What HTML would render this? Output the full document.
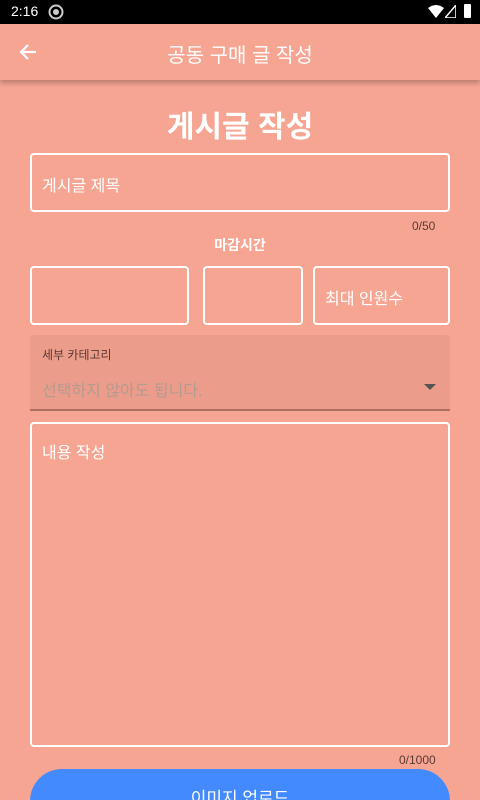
<!DOCTYPE html>
<html style="width:480px;height:800px;overflow:hidden"><head><meta charset="utf-8"><style>
*{margin:0;padding:0;box-sizing:border-box}
body{width:480px;height:800px;overflow:hidden;background:#f6a593;font-family:"Liberation Sans","Noto Sans CJK KR",sans-serif;position:relative}
.abs{position:absolute}
.box{position:absolute;border:2px solid #fff;border-radius:4px}
.ph{position:absolute;color:#fff;font-size:16px}
.cnt{position:absolute;font-size:12px;color:#5a3a33}
</style></head><body>
<div class="abs" style="left:0;top:0;width:480px;height:24px;background:#000;color:#fff;font-size:14px">
<span class="abs" style="left:11px;top:3px">2:16</span>
<svg class="abs" style="left:48px;top:4px" width="16" height="16" viewBox="0 0 16 16"><circle cx="8" cy="8" r="6.5" fill="none" stroke="#ccc" stroke-width="2"/><circle cx="8" cy="8" r="3" fill="#ccc"/></svg>
<svg class="abs" style="left:428px;top:5px" width="16" height="13" viewBox="0 0 16 13"><path d="M0 3 Q8 -3 16 3 L8 13Z" fill="#fff"/></svg>
<svg class="abs" style="left:445px;top:5px" width="11" height="13" viewBox="0 0 11 13"><path d="M11 0 V13 H0Z" fill="none" stroke="#fff" stroke-width="1.5"/></svg>
<div class="abs" style="left:464px;top:4px;width:7px;height:14px;background:#fff;border-radius:1px"></div>
</div>
<div class="abs" style="left:0;top:24px;width:480px;height:56px;background:#f6a593;box-shadow:0 3px 5px rgba(0,0,0,0.25)">
<svg class="abs" style="left:18px;top:18px" width="20" height="20" viewBox="0 0 20 20"><path d="M18 10H3M10 3L3 10L10 17" fill="none" stroke="#fff" stroke-width="2.2"/></svg>
<div class="abs" style="left:0;width:480px;top:15px;text-align:center;color:#fff;font-size:20px">공동 구매 글 작성</div>
</div>
<div class="abs" style="left:0;width:480px;top:102px;text-align:center;color:#fff;font-size:30px;font-weight:bold">게시글 작성</div>
<div class="box" style="left:30px;top:153px;width:420px;height:59px"></div>
<div class="ph" style="left:42px;top:172px">게시글 제목</div>
<div class="cnt" style="left:412px;top:219px">0/50</div>
<div class="abs" style="left:0;width:480px;top:235px;text-align:center;color:#fff;font-size:14px;font-weight:bold">마감시간</div>
<div class="box" style="left:30px;top:266px;width:159px;height:59px"></div>
<div class="box" style="left:203px;top:266px;width:100px;height:59px"></div>
<div class="box" style="left:313px;top:266px;width:137px;height:59px"></div>
<div class="ph" style="left:325px;top:285px">최대 인원수</div>
<div class="abs" style="left:30px;top:335px;width:420px;height:76px;background:#ec9c8a;border-radius:4px 4px 0 0;border-bottom:2px solid #b06e62"></div>
<div class="abs" style="left:42px;top:346px;font-size:12px;color:#5a3a33">세부 카테고리</div>
<div class="abs" style="left:42px;top:377px;font-size:16px;color:#b59a90">선택하지 않아도 됩니다.</div>
<svg class="abs" style="left:424px;top:384px" width="12" height="6"><path d="M0 0H12L6 6Z" fill="#555"/></svg>
<div class="box" style="left:30px;top:422px;width:420px;height:325px"></div>
<div class="ph" style="left:42px;top:439px">내용 작성</div>
<div class="cnt" style="left:399px;top:753px">0/1000</div>
<div class="abs" style="left:30px;top:769px;width:420px;height:31px;overflow:hidden;border-radius:31px 31px 0 0/31px 31px 0 0">
<div style="width:420px;height:64px;background:#448aff;border-radius:32px;color:#fff;font-size:17px;text-align:center;padding-top:15px">이미지 업로드</div></div>
</body></html>
